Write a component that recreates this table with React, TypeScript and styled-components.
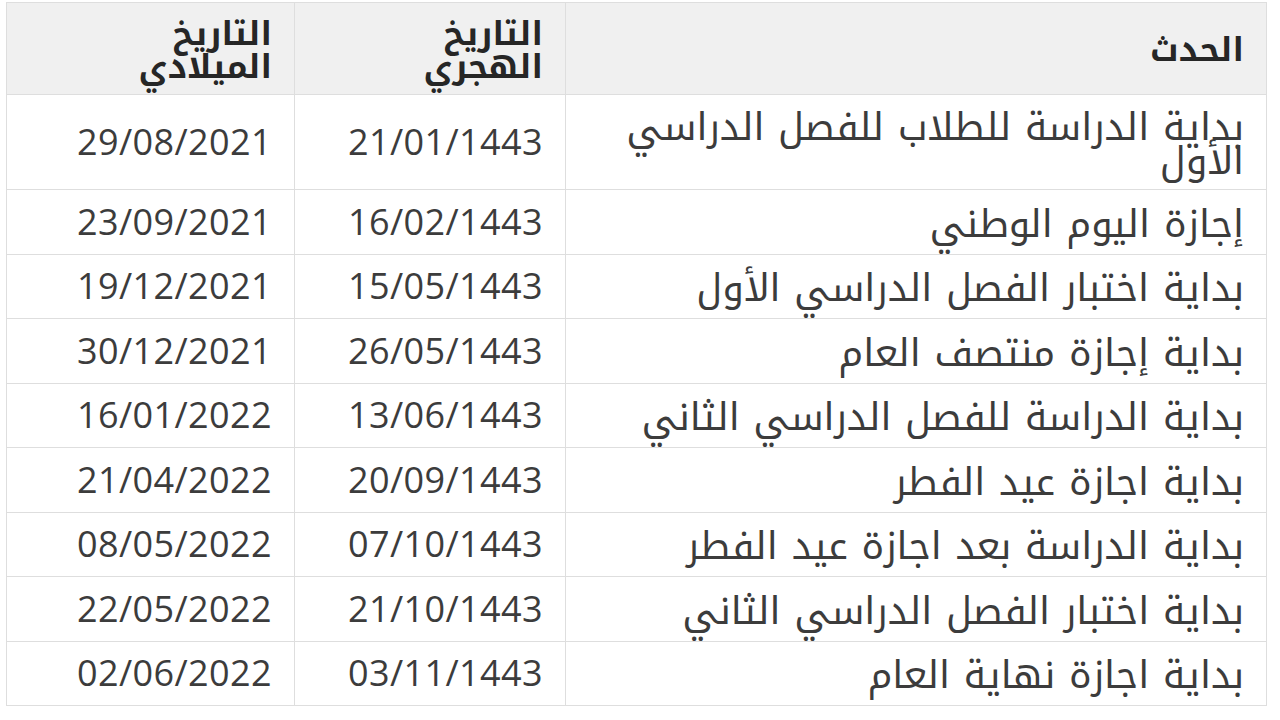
import React from 'react';
import styled, { createGlobalStyle } from 'styled-components';

const GlobalStyle = createGlobalStyle`
  html, body {
    margin: 0;
    padding: 0;
    background: #ffffff;
  }
  body {
    font-family: "Open Sans", "Noto Kufi Arabic", "Noto Sans Arabic", "DejaVu Sans", sans-serif;
  }
`;

const rows = [
  { event: 'بداية الدراسة للطلاب للفصل الدراسي الأول', hijri: '21/01/1443', greg: '29/08/2021' },
  { event: 'إجازة اليوم الوطني', hijri: '16/02/1443', greg: '23/09/2021' },
  { event: 'بداية اختبار الفصل الدراسي الأول', hijri: '15/05/1443', greg: '19/12/2021' },
  { event: 'بداية إجازة منتصف العام', hijri: '26/05/1443', greg: '30/12/2021' },
  { event: 'بداية الدراسة للفصل الدراسي الثاني', hijri: '13/06/1443', greg: '16/01/2022' },
  { event: 'بداية اجازة عيد الفطر', hijri: '20/09/1443', greg: '21/04/2022' },
  { event: 'بداية الدراسة بعد اجازة عيد الفطر', hijri: '07/10/1443', greg: '08/05/2022' },
  { event: 'بداية اختبار الفصل الدراسي الثاني', hijri: '21/10/1443', greg: '22/05/2022' },
  { event: 'بداية اجازة نهاية العام', hijri: '03/11/1443', greg: '02/06/2022' },
];

const Page = styled.div`
  padding: 2px 14px 0 6px;
`;

const Table = styled.table`
  width: 1260px;
  border-collapse: collapse;
  table-layout: fixed;
  direction: rtl;
  color: #3c3c3c;
`;

const Col = styled.col<{ $w: number }>`
  width: ${(p) => p.$w}px;
`;

const HeadRow = styled.tr`
  height: 92px;
  background: #f0f0f0;
`;

const BodyRow = styled.tr<{ $tall?: boolean }>`
  height: ${(p) => (p.$tall ? '95px' : '64.5px')};
  background: #ffffff;
`;

const HeadCell = styled.th`
  border: 1px solid #dedede;
  padding: 0 22px;
  text-align: right;
  vertical-align: middle;
  font-size: 33px;
  line-height: 33px;
  font-weight: 700;
  color: #262626;
`;

const EventCell = styled.td`
  border: 1px solid #dedede;
  padding: 0 22px;
  text-align: right;
  vertical-align: middle;
  font-size: 38px;
  line-height: 34px;
  word-spacing: 4px;
`;

const DateCell = styled.td`
  border: 1px solid #dedede;
  padding: 0 22px;
  text-align: right;
  vertical-align: middle;
  font-size: 36px;
  line-height: 40px;
  letter-spacing: 0.4px;
  direction: ltr;
`;

export default function App() {
  return (
    <>
      <GlobalStyle />
      <Page>
        <Table>
          <colgroup>
            <Col $w={701} />
            <Col $w={271} />
            <Col $w={288} />
          </colgroup>
          <thead>
            <HeadRow>
              <HeadCell>الحدث</HeadCell>
              <HeadCell>التاريخ<br />الهجري</HeadCell>
              <HeadCell>التاريخ<br />الميلادي</HeadCell>
            </HeadRow>
          </thead>
          <tbody>
            {rows.map((r, i) => (
              <BodyRow key={r.hijri} $tall={i === 0}>
                <EventCell>{r.event}</EventCell>
                <DateCell>{r.hijri}</DateCell>
                <DateCell>{r.greg}</DateCell>
              </BodyRow>
            ))}
          </tbody>
        </Table>
      </Page>
    </>
  );
}
